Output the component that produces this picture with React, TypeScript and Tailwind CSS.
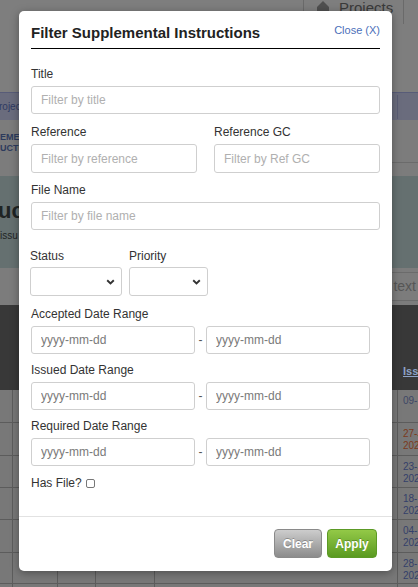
import React from 'react';

const font = { fontFamily: '"Liberation Sans", Arial, sans-serif' };

const tableRows = [
  { h: 'h-[33px]', l1: '09-', l2: '', c: 'text-[#3d4766]' },
  { h: 'h-[33px]', l1: '27-J', l2: '202', c: 'text-[#7b3a1c]' },
  { h: 'h-[32px]', l1: '23-J', l2: '202', c: 'text-[#34406a]' },
  { h: 'h-[32px]', l1: '18-', l2: '202', c: 'text-[#34406a]' },
  { h: 'h-[33px]', l1: '04-', l2: '202', c: 'text-[#34406a]' },
  { h: 'h-[31px]', l1: '28-', l2: '202', c: 'text-[#34406a]' },
  { h: 'h-[33px]', l1: '27-', l2: '202', c: 'text-[#34406a]' },
];

function Chevron() {
  return (
    <svg width="9" height="6" viewBox="0 0 9 6" className="pointer-events-none absolute right-[7px] top-[12px]">
      <path d="M1.2 1.2L4.5 4.4L7.8 1.2" fill="none" stroke="#333" strokeWidth="1.9" />
    </svg>
  );
}

function Label({ children, className = '' }: { children: React.ReactNode; className?: string }) {
  return <div className={`text-[12px] leading-[15px] text-[#333] ${className}`}>{children}</div>;
}

function TextInput({ placeholder, className = '' }: { placeholder: string; className?: string }) {
  return (
    <input
      type="text"
      placeholder={placeholder}
      className={`h-[28px] rounded-[3px] border border-[#cfcfcf] bg-white px-[9px] text-[12px] text-[#333] outline-none placeholder:text-[#b0b0b0] ${className}`}
    />
  );
}

function DateRange({ label, className = '' }: { label: string; className?: string }) {
  return (
    <div className={className}>
      <Label>{label}</Label>
      <div className="mt-[4px] flex items-center">
        <input
          type="text"
          placeholder="yyyy-mm-dd"
          className="h-[28px] w-[164px] rounded-[3px] border border-[#cfcfcf] bg-white px-[9px] text-[12px] outline-none placeholder:text-[#7a7a7a]"
        />
        <span className="w-[11px] text-center text-[12px] text-[#555]">-</span>
        <input
          type="text"
          placeholder="yyyy-mm-dd"
          className="h-[28px] w-[164px] rounded-[3px] border border-[#cfcfcf] bg-white px-[9px] text-[12px] outline-none placeholder:text-[#7a7a7a]"
        />
      </div>
    </div>
  );
}

export default function App() {
  return (
    <div className="relative h-[587px] w-[418px] overflow-hidden bg-[#7b7b7b]" style={font}>
      {/* Dimmed page behind the dialog */}
      <div className="flex flex-col">
        {/* top header */}
        <div className="relative h-[92px] bg-[#7e7e7e]">
          <div className="absolute left-[303px] top-0 flex h-[24px] w-[101px] items-start border-x border-[#6a6a6a]">
            <svg width="14" height="14" viewBox="0 0 14 14" className="ml-[12px] mt-[1px]">
              <path d="M7 0L13 6V14H1V6Z" fill="#4f4f4f" />
            </svg>
            <span className="ml-[9px] -mt-[3px] text-[15px] text-[#3a3a3a]">Projects</span>
          </div>
        </div>
        {/* nav band */}
        <div className="flex h-[28px] items-center border-t border-[#585c78] bg-[#6a6c7d]">
          <span className="-ml-[1px] text-[10px] text-[#2f3a62]">rojec</span>
          <div className="ml-auto mr-[20px] h-[24px] border-l border-[#5a5d75]" />
        </div>
        {/* breadcrumb */}
        <div className="relative h-[56px] bg-[#7c7c7c] pt-[12px]">
          <div className="text-[9px] font-bold leading-[11px] text-[#2c3a5c]">EME</div>
          <div className="text-[9px] font-bold leading-[11px] text-[#2c3a5c]">UCTI</div>
          <div className="absolute bottom-[13px] left-[392px] right-0 border-t border-[#6b6b6b]" />
        </div>
        {/* page title */}
        <div className="h-[92px] bg-[#657070] pt-[22px]">
          <div className="-ml-[2px] text-[22px] font-bold leading-[26px] text-[#1f2424]">uc</div>
          <div className="mt-[6px] text-[10px] leading-[12px] text-[#1f2424]">issu</div>
        </div>
        {/* search */}
        <div className="flex h-[37px] items-center justify-end overflow-hidden bg-[#7c7c7c]">
          <div className="flex h-[29px] items-center justify-end border-y border-[#6b6b6b] pl-[4px]">
            <span className="mr-[2px] whitespace-nowrap text-[14px] text-[#565656]">Search in text</span>
          </div>
        </div>
        {/* table header */}
        <div className="flex h-[85px] items-end bg-[#383838] pb-[11px]">
          <span className="ml-[403px] text-[11px] font-bold text-[#8ea2c6] underline">Issu</span>
        </div>
        {/* table rows */}
        {tableRows.map((r, i) => (
          <div
            key={i}
            className={`grid ${r.h} grid-cols-[13px_45px_38px_59px_243px_20px] border-b border-[#5c5c5c] bg-[#787878]`}
          >
            <div className="border-r border-[#5c5c5c]" />
            <div className="border-r border-[#5c5c5c]" />
            <div className="border-r border-[#5c5c5c]" />
            <div className="border-r border-[#5c5c5c]" />
            <div className="border-r border-[#5c5c5c]" />
            <div className={`overflow-hidden whitespace-nowrap pl-[5px] pt-[5px] text-[10px] leading-[12px] ${r.c}`}>
              <div>{r.l1}</div>
              <div>{r.l2}</div>
            </div>
          </div>
        ))}
      </div>

      {/* Dialog */}
      <div className="absolute left-[19px] top-[11px] h-[560px] w-[373px] rounded-[5px] bg-white shadow-[0_2px_8px_rgba(0,0,0,0.35)]">
        <div className="px-[12px] pt-[11px]">
          <div className="flex items-start justify-between border-b-[1.5px] border-[#000] pb-[6px]">
            <h2 className="pt-[1px] text-[15px] font-bold leading-[19px] text-[#222]">
              Filter Supplemental Instructions
            </h2>
            <button className="mt-[1px] text-[11px] leading-[14px] text-[#4c6fba]">Close (X)</button>
          </div>

          <Label className="mt-[18px]">Title</Label>
          <TextInput placeholder="Filter by title" className="mt-[4px] w-full" />

          <div className="mt-[11px] flex gap-[17px]">
            <div className="w-[166px]">
              <Label>Reference</Label>
              <TextInput placeholder="Filter by reference" className="mt-[4px] h-[29px] w-full" />
            </div>
            <div className="w-[166px]">
              <Label>Reference GC</Label>
              <TextInput placeholder="Filter by Ref GC" className="mt-[4px] h-[29px] w-full" />
            </div>
          </div>

          <Label className="mt-[10px]">File Name</Label>
          <TextInput placeholder="Filter by file name" className="mt-[4px] w-full" />

          <div className="mt-[19px] -ml-[1px] flex gap-[7px]">
            <div className="w-[92px]">
              <Label>Status</Label>
              <div className="relative mt-[3px]">
                <select className="h-[29px] w-full appearance-none rounded-[3px] border border-[#cfcfcf] bg-white outline-none" />
                <Chevron />
              </div>
            </div>
            <div className="w-[79px]">
              <Label>Priority</Label>
              <div className="relative mt-[3px]">
                <select className="h-[29px] w-full appearance-none rounded-[3px] border border-[#cfcfcf] bg-white outline-none" />
                <Chevron />
              </div>
            </div>
          </div>

          <DateRange label="Accepted Date Range" className="mt-[11px]" />
          <DateRange label="Issued Date Range" className="mt-[9px]" />
          <DateRange label="Required Date Range" className="mt-[9px]" />

          <div className="mt-[10px] flex items-center">
            <span className="text-[12px] leading-[15px] text-[#333]">Has File?</span>
            <span className="ml-[4px] inline-block h-[9px] w-[9px] rounded-[2px] border border-[#777] bg-white" />
          </div>
        </div>

        <div className="mt-[25px] border-t border-[#e2e2e2]" />

        <div className="flex justify-end gap-[5px] pr-[15px] pt-[12px]">
          <button className="h-[29px] w-[48px] rounded-[4px] border border-[#8a8a8a] bg-gradient-to-b from-[#cdcdcd] to-[#8c8c8c] text-[12px] font-bold text-white [text-shadow:0_-1px_0_rgba(0,0,0,0.25)]">
            Clear
          </button>
          <button className="h-[29px] w-[50px] rounded-[4px] border border-[#5c9a26] bg-gradient-to-b from-[#93c947] to-[#5a9a20] text-[12px] font-bold text-white [text-shadow:0_-1px_0_rgba(0,0,0,0.25)]">
            Apply
          </button>
        </div>
      </div>
    </div>
  );
}
